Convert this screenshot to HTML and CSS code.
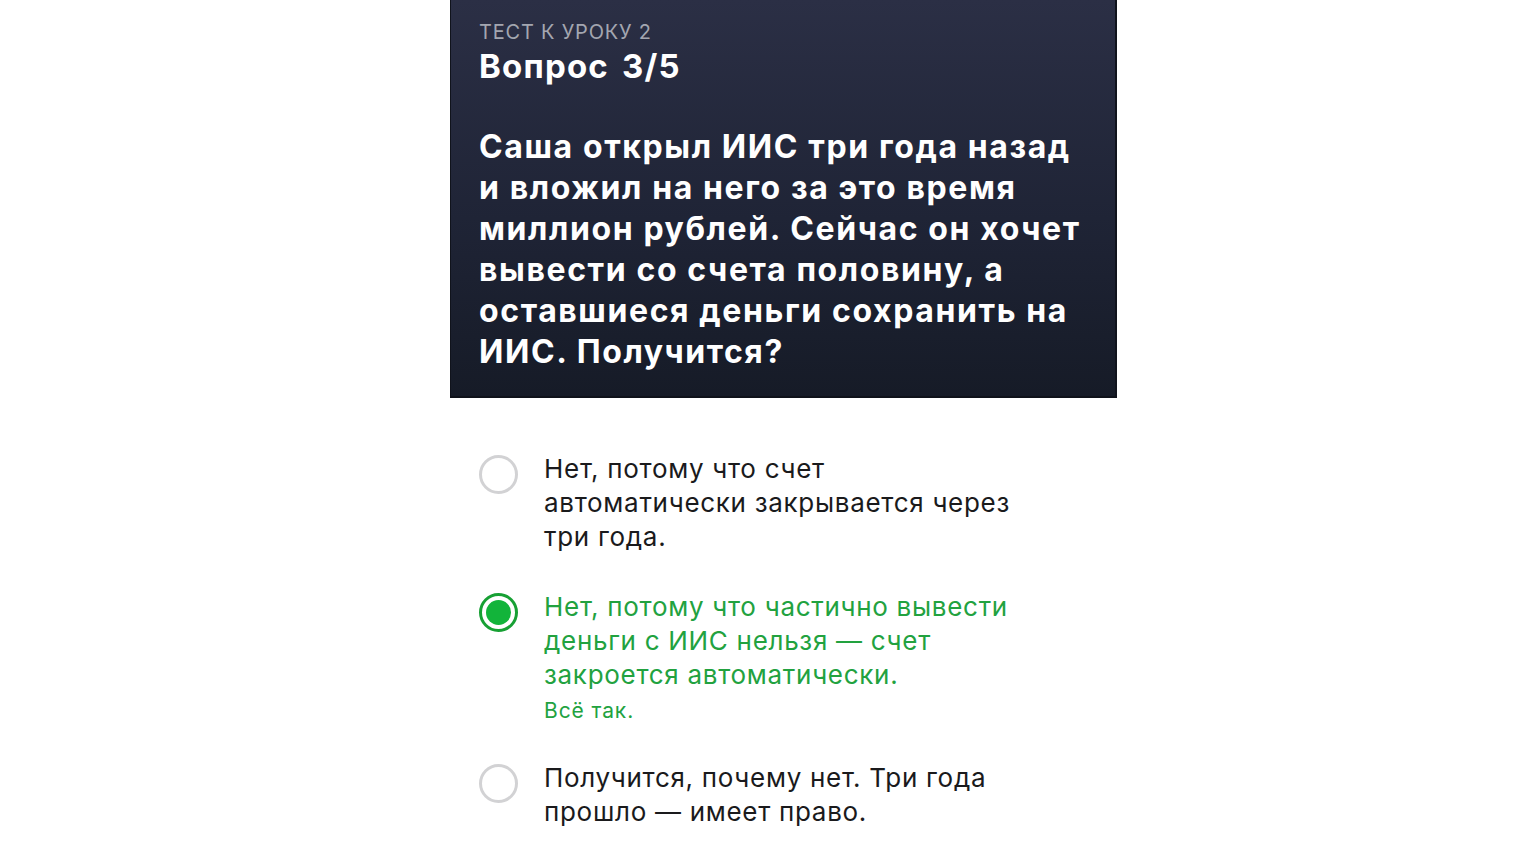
FILE: index.html
```html
<!DOCTYPE html>
<html lang="ru">
<head>
<meta charset="utf-8">
<link rel="stylesheet" href="styles.css">
</head>
<body>
<main class="page">
  <section class="card">
    <div class="eyebrow">ТЕСТ К УРОКУ 2</div>
    <h1 class="title">Вопрос 3/5</h1>
    <p class="question">Саша открыл ИИС три года назад<br>и вложил на него за это время<br>миллион рублей. Сейчас он хочет<br>вывести со счета половину, а<br>оставшиеся деньги сохранить на<br>ИИС. Получится?</p>
  </section>
  <ul class="answers">
    <li class="answer">
      <span class="radio"></span>
      <div class="answer-body">
        <div class="answer-text">Нет, потому что счет<br>автоматически закрывается через<br>три года.</div>
      </div>
    </li>
    <li class="answer answer-correct">
      <span class="radio radio-on"></span>
      <div class="answer-body">
        <div class="answer-text">Нет, потому что частично вывести<br>деньги с ИИС нельзя — счет<br>закроется автоматически.</div>
        <div class="answer-note">Всё так.</div>
      </div>
    </li>
    <li class="answer">
      <span class="radio"></span>
      <div class="answer-body">
        <div class="answer-text">Получится, почему нет. Три года<br>прошло — имеет право.</div>
      </div>
    </li>
  </ul>
</main>
</body>
</html>
```

FILE: styles.css
```css
html, body {
  margin: 0;
  padding: 0;
  background: #ffffff;
}
body {
  font-family: Inter, Roboto, "Liberation Sans", sans-serif;
}
.page {
  width: 667px;
  margin-left: 450px;
}
.card {
  box-sizing: border-box;
  height: 398px;
  padding: 20px 10px 0 28px;
  background: linear-gradient(180deg, #2b2f45 0%, #1f2436 55%, #161b27 100%);
  border-left: 1px solid #10131c;
  border-right: 2px solid #10131c;
  border-bottom: 2px solid #0f121a;
  color: #ffffff;
  white-space: nowrap;
}
.eyebrow {
  font-size: 20px;
  line-height: 24px;
  color: #a3a6b0;
  letter-spacing: 0.8px;
}
.title {
  margin: 2px 0 0;
  font-size: 33px;
  line-height: 40px;
  font-weight: 700;
  letter-spacing: 1.2px;
  word-spacing: 4px;
}
.question {
  margin: 40px 0 0;
  font-size: 32px;
  line-height: 41px;
  font-weight: 700;
  letter-spacing: 1.6px;
}
.answers {
  list-style: none;
  margin: 0;
  padding: 54px 0 0 29px;
}
.answer {
  display: flex;
  align-items: flex-start;
  gap: 26px;
  margin-bottom: 36px;
}
.radio {
  flex: none;
  box-sizing: border-box;
  width: 39px;
  height: 39px;
  margin-top: 3px;
  border-radius: 50%;
  border: 3px solid #d2d2d4;
  background: #ffffff;
}
.radio-on {
  border-color: #17a034;
  position: relative;
}
.radio-on::after {
  content: "";
  position: absolute;
  left: 4px;
  top: 4px;
  width: 25px;
  height: 25px;
  border-radius: 50%;
  background: #12b43a;
}
.answer-text {
  font-size: 26px;
  line-height: 34px;
  color: #1a1a1c;
  letter-spacing: 0.7px;
  white-space: nowrap;
}
.answer-correct .answer-text {
  color: #22a23f;
}
.answer-note {
  margin-top: 5px;
  font-size: 21px;
  line-height: 28px;
  color: #22a23f;
  letter-spacing: 0.9px;
}
```
